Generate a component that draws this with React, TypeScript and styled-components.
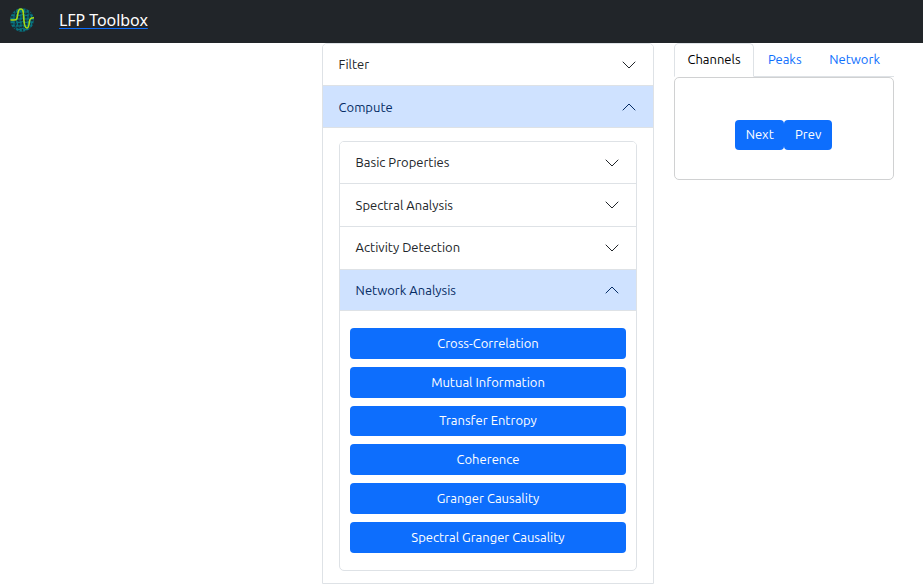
import React from 'react';
import styled, { createGlobalStyle } from 'styled-components';

const GlobalStyle = createGlobalStyle`
  * { box-sizing: border-box; }
  body {
    margin: 0;
    background: #fff;
    color: #212529;
    font: 13px/20px Ubuntu, 'Noto Sans', sans-serif;
    overflow: hidden;
  }
  button { font: inherit; }
`;

const Navbar = styled.header`
  display: flex;
  align-items: center;
  height: 43px;
  padding: 0 10px 3px;
  gap: 25px;
  background: #212529;
`;

const Brand = styled.a`
  color: #fff;
  font: 16px/22px 'Noto Sans', sans-serif;
  letter-spacing: -0.06px;
  text-decoration: underline #0d6efd 1px;
  text-underline-offset: 2px;
`;

const Layout = styled.main`
  display: grid;
  grid-template-columns: 332px 220px;
  column-gap: 20px;
  align-items: start;
  padding-left: 322px;
`;

const Accordion = styled.section<{ $nested?: boolean }>`
  border: 1px solid #dee2e6;
  border-radius: ${p => (p.$nested ? '5px' : '5px 5px 0 0')};
  height: ${p => (p.$nested ? '430px' : '541px')};
  overflow: hidden;
`;

const AccordionHeader = styled.button<{ $open?: boolean; $height: number; $rise: number }>`
  display: flex;
  align-items: center;
  justify-content: space-between;
  width: 100%;
  height: ${p => p.$height}px;
  padding: 1px 16px ${p => p.$rise * 2}px 15.6px;
  border: 0;
  border-bottom: 1px solid #dee2e6;
  background: ${p => (p.$open ? '#cfe2ff' : '#fff')};
  color: ${p => (p.$open ? '#052c65' : '#212529')};
  text-align: left;

  svg { transform: ${p => (p.$open ? 'rotate(180deg)' : 'none')}; }
`;

const AccordionBody = styled.div`
  padding: 13px 16px;
`;

const Label = styled.span<{ $rise?: number }>`
  white-space: nowrap;
  margin-bottom: ${p => (p.$rise ?? 0) * 2}px;
`;

const ActionList = styled.div`
  display: flex;
  flex-direction: column;
  gap: 8px;
  padding: 17px 10px;
`;

const Button = styled.button`
  display: flex;
  align-items: center;
  justify-content: center;
  height: 30.8px;
  padding: 0;
  border: 0;
  border-radius: 4px;
  background: #0d6efd;
  color: #fff;
`;

const Tabs = styled.nav`
  display: flex;
  height: 34px;
  border-bottom: 1px solid #dee2e6;
`;

const Tab = styled.button<{ $active?: boolean; $width: number }>`
  width: ${p => p.$width}px;
  height: 34px;
  padding: 0 0 3px;
  border: 1px solid ${p => (p.$active ? '#dee2e6' : 'transparent')};
  border-bottom-color: ${p => (p.$active ? '#fff' : 'transparent')};
  border-radius: 5px 5px 0 0;
  background: ${p => (p.$active ? '#fff' : 'transparent')};
  color: ${p => (p.$active ? '#000' : '#0d6efd')};
`;

const Card = styled.div`
  display: flex;
  align-items: flex-start;
  justify-content: center;
  height: 103px;
  padding: 42px 1px 0 0;
  border: 1px solid #d0d1d2;
  border-radius: 5px;
`;

const PagerButton = styled(Button)<{ $width: number }>`
  width: ${p => p.$width}px;
  height: 30px;
  padding: 0 0 1px 0.4px;
`;

const Chevron = () => (
  <svg width="16" height="16" viewBox="0 0 16 16" fill="none" stroke="currentColor" strokeLinecap="round" strokeLinejoin="round">
    <path d="m2 5 6 6 6-6" />
  </svg>
);

const Logo = () => (
  <svg width="24" height="24" viewBox="0 0 24 24" fill="none">
    <circle cx="12" cy="12" r="11.8" fill="#087480" />
    <path
      d="M5.5 2v20M9 1v22M12.5 0v24M16 1v22M19.5 3v18M2 5.5h20M1 9h22M0 12.5h24M1 16h22M3 19.5h18"
      stroke="#173039"
      strokeWidth="1.3"
      strokeDasharray="2.4 1.1"
    />
    <path
      d="M.5 12H4c3 0 3-1 3.7-5.5C8.4 2 9 1 11 1c3 0 2 4 3 12 .5 5 1 7 3 7s2-3 2.3-6c.4-3 1-4.2 4.7-4.2"
      stroke="#a6dc16"
      strokeWidth="1.6"
    />
  </svg>
);

type Item = { text: string; rise?: number; labelRise?: number; height?: number; open?: boolean };

const Header = ({ text, rise = 0, labelRise = 0, height = 43, open }: Item) => (
  <AccordionHeader $open={open} $height={height} $rise={rise} aria-expanded={!!open}>
    <Label $rise={labelRise}>{text}</Label>
    <Chevron />
  </AccordionHeader>
);

const sections: Item[] = [
  { text: 'Basic Properties', height: 42, labelRise: 1 },
  { text: 'Spectral Analysis', height: 43, rise: 1 },
  { text: 'Activity Detection', height: 43, rise: 1, labelRise: 1 },
  { text: 'Network Analysis', height: 41, rise: 1, open: true },
];

const actions: Item[] = [
  { text: 'Cross-Correlation' },
  { text: 'Mutual Information' },
  { text: 'Transfer Entropy', labelRise: 1 },
  { text: 'Coherence', labelRise: 1 },
  { text: 'Granger Causality', labelRise: 1 },
  { text: 'Spectral Granger Causality' },
];

export default function App() {
  return (
    <>
      <GlobalStyle />
      <Navbar>
        <Logo />
        <Brand>LFP Toolbox</Brand>
      </Navbar>
      <Layout>
        <Accordion>
          <Header text="Filter" height={42} labelRise={1} />
          <Header text="Compute" height={42} open />
          <AccordionBody>
            <Accordion $nested>
              {sections.map(s => <Header key={s.text} {...s} />)}
              <ActionList>
                {actions.map(a => (
                  <Button key={a.text}><Label $rise={a.labelRise}>{a.text}</Label></Button>
                ))}
              </ActionList>
            </Accordion>
          </AccordionBody>
        </Accordion>
        <aside>
          <Tabs>
            <Tab $active $width={80}><Label>Channels</Label></Tab>
            <Tab $width={61.6}><Label>Peaks</Label></Tab>
            <Tab $width={78}><Label>Network</Label></Tab>
          </Tabs>
          <Card>
            <PagerButton $width={49}><Label $rise={0.5}>Next</Label></PagerButton>
            <PagerButton $width={48}><Label $rise={0.5}>Prev</Label></PagerButton>
          </Card>
        </aside>
      </Layout>
    </>
  );
}
